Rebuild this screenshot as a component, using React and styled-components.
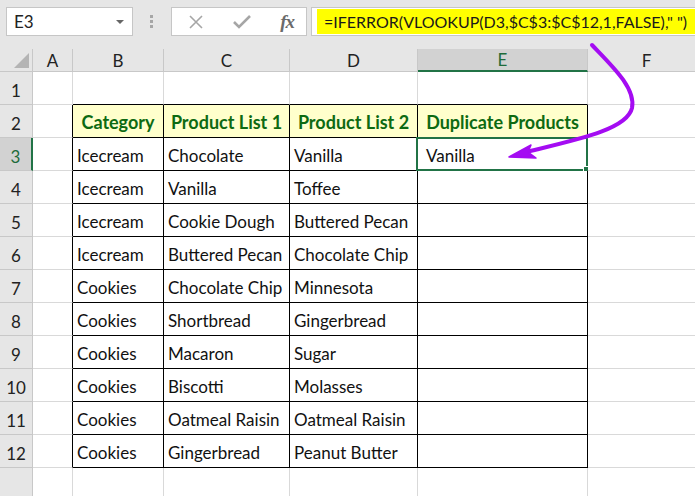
import React from 'react';
import styled, { createGlobalStyle } from 'styled-components';

const GlobalStyle = createGlobalStyle`
  html, body {
    margin: 0;
    padding: 0;
    background: #ffffff;
    overflow: hidden;
  }
  body {
    font-family: Lato, "Liberation Sans", sans-serif;
  }
`;

const Page = styled.div`
  position: relative;
  width: 695px;
  height: 496px;
  overflow: hidden;
  background: #e6e6e6;
`;

const Toolbar = styled.div`
  display: flex;
  align-items: flex-start;
  height: 43px;
  padding: 7px 0 0 6px;
  box-sizing: border-box;
  overflow: hidden;
`;

const NameBox = styled.div`
  flex-shrink: 0;
  display: flex;
  align-items: center;
  justify-content: space-between;
  width: 127px;
  height: 29px;
  box-sizing: border-box;
  background: #fff;
  border: 1px solid #c6c6c6;
  padding: 0 8px 0 7px;
  font-size: 17px;
  color: #222;
`;

const Caret = styled.span`
  width: 0;
  height: 0;
  border-left: 4px solid transparent;
  border-right: 4px solid transparent;
  border-top: 4px solid #666;
`;

const Grip = styled.div`
  flex-shrink: 0;
  display: flex;
  flex-direction: column;
  gap: 2px;
  margin: 8px 18px 0 17px;
  span {
    width: 3px;
    height: 3px;
    background: #a6a6a6;
  }
`;

const IconBox = styled.div`
  flex-shrink: 0;
  display: flex;
  align-items: center;
  justify-content: space-between;
  width: 136px;
  height: 29px;
  box-sizing: border-box;
  background: #fff;
  border: 1px solid #c6c6c6;
  padding: 0 12px 0 16px;
`;

const Fx = styled.span`
  font-family: "Liberation Serif", serif;
  font-style: italic;
  font-weight: bold;
  font-size: 19px;
  color: #6b6b6b;
  letter-spacing: -1px;
`;

const FormulaBox = styled.div`
  flex: 1;
  min-width: 0;
  display: flex;
  align-items: center;
  height: 29px;
  box-sizing: border-box;
  background: #fff;
  border: 1px solid #c6c6c6;
  border-right: none;
  margin-left: 4px;
  padding: 0 0 0 5px;
  overflow: hidden;
`;

const Highlight = styled.span`
  display: flex;
  align-items: center;
  height: 25px;
  padding: 0 9px 0 7px;
  background: #ffff00;
  font-family: Lato, "Liberation Sans", sans-serif;
  font-size: 16px;
  color: #1a1a1a;
  white-space: nowrap;
`;

const Sheet = styled.div`
  display: grid;
  grid-template-columns: 33px 40px 91px 126px 128px 170px 118px;
  grid-template-rows: 23px repeat(12, 33px) 33px;
  margin-top: 6px;
  background: #fff;
`;

const Corner = styled.div`
  position: relative;
  background: #e6e6e6;
  border-right: 1px solid #c8c8c8;
  border-bottom: 1px solid #c8c8c8;
  box-sizing: border-box;
  &::after {
    content: '';
    position: absolute;
    right: 3px;
    bottom: 3px;
    width: 0;
    height: 0;
    border-left: 15px solid transparent;
    border-bottom: 15px solid #b4b4b4;
  }
`;

const ColHead = styled.div`
  display: flex;
  align-items: center;
  justify-content: center;
  box-sizing: border-box;
  background: ${p => (p.$active ? '#d2d2d2' : '#e6e6e6')};
  border-right: 1px solid #c8c8c8;
  border-bottom: ${p => (p.$active ? '2px solid #217346' : '1px solid #c8c8c8')};
  font-size: 17px;
  color: ${p => (p.$active ? '#1e6b3a' : '#222')};
`;

const RowHead = styled.div`
  display: flex;
  align-items: flex-end;
  justify-content: center;
  padding-bottom: 3px;
  box-sizing: border-box;
  background: ${p => (p.$active ? '#d2d2d2' : '#e6e6e6')};
  border-right: ${p => (p.$active ? '2px solid #217346' : '1px solid #c8c8c8')};
  border-bottom: 1px solid #c8c8c8;
  font-size: 17px;
  color: ${p => (p.$active ? '#1e6b3a' : '#222')};
`;

const Cell = styled.div`
  position: relative;
  display: flex;
  align-items: flex-end;
  padding: 0 0 4px 4px;
  box-sizing: border-box;
  white-space: nowrap;
  background: ${p => (p.$head ? '#ffffcc' : '#fff')};
  border-right: 1px solid ${p => (p.$edgeRight ? '#000' : '#d9d9d9')};
  border-bottom: 1px solid ${p => (p.$edgeBottom ? '#000' : '#d9d9d9')};
  font-size: ${p => (p.$head ? '18px' : '17px')};
  font-weight: ${p => (p.$head ? 700 : 400)};
  color: ${p => (p.$head ? '#0d6a12' : '#111')};
  justify-content: ${p => (p.$head ? 'center' : 'flex-start')};
  ${p => p.$head && 'padding-left: 0;'}
  ${p => p.$indent && 'padding-left: 8px;'}
`;

const Selection = styled.div`
  position: absolute;
  left: -2px;
  top: -1px;
  right: -1px;
  bottom: -1px;
  border: 2px solid #217346;
  pointer-events: none;
  &::after {
    content: '';
    position: absolute;
    right: -4px;
    bottom: -4px;
    width: 5px;
    height: 5px;
    background: #217346;
    border: 1px solid #fff;
  }
`;

const Arrow = styled.svg`
  position: absolute;
  left: 0;
  top: 0;
  pointer-events: none;
`;

const columns = ['A', 'B', 'C', 'D', 'E', 'F'];

const rows = [
  ['Icecream', 'Chocolate', 'Vanilla', 'Vanilla'],
  ['Icecream', 'Vanilla', 'Toffee', ''],
  ['Icecream', 'Cookie Dough', 'Buttered Pecan', ''],
  ['Icecream', 'Buttered Pecan', 'Chocolate Chip', ''],
  ['Cookies', 'Chocolate Chip', 'Minnesota', ''],
  ['Cookies', 'Shortbread', 'Gingerbread', ''],
  ['Cookies', 'Macaron', 'Sugar', ''],
  ['Cookies', 'Biscotti', 'Molasses', ''],
  ['Cookies', 'Oatmeal Raisin', 'Oatmeal Raisin', ''],
  ['Cookies', 'Gingerbread', 'Peanut Butter', ''],
];

const headers = ['Category', 'Product List 1', 'Product List 2', 'Duplicate Products'];

function rowValues(r) {
  // r is the sheet row number (1-based)
  if (r === 2) return ['', ...headers, ''];
  if (r >= 3 && r <= 12) return ['', ...rows[r - 3], ''];
  return ['', '', '', '', '', ''];
}

function App() {
  const sheetRows = Array.from({ length: 13 }, (_, i) => i + 1);

  return (
    <Page>
      <GlobalStyle />
      <Toolbar>
        <NameBox>
          E3
          <Caret />
        </NameBox>
        <Grip>
          <span />
          <span />
          <span />
        </Grip>
        <IconBox>
          <svg width="16" height="16" viewBox="0 0 16 16">
            <path d="M2 2 L14 14 M14 2 L2 14" stroke="#a6a6a6" strokeWidth="1.6" fill="none" />
          </svg>
          <svg width="18" height="16" viewBox="0 0 18 16">
            <path d="M1 8 L6 13 L17 2" stroke="#a6a6a6" strokeWidth="2.6" fill="none" />
          </svg>
          <Fx>fx</Fx>
        </IconBox>
        <FormulaBox>
          <Highlight>=IFERROR(VLOOKUP(D3,$C$3:$C$12,1,FALSE),&quot; &quot;)</Highlight>
        </FormulaBox>
      </Toolbar>

      <Sheet>
        <Corner />
        {columns.map(c => (
          <ColHead key={c} $active={c === 'E'}>
            {c}
          </ColHead>
        ))}
        {sheetRows.map(r => (
          <React.Fragment key={r}>
            {/* row 13 is cut by the window edge, so its number is not shown */}
            <RowHead $active={r === 3}>{r <= 12 ? r : ''}</RowHead>
            {rowValues(r).map((v, ci) => {
              const inTableRows = r >= 2 && r <= 12;
              const edgeRight = inTableRows && ci >= 0 && ci <= 4;
              const edgeBottom = r >= 1 && r <= 12 && ci >= 1 && ci <= 4;
              return (
                <Cell
                  key={ci}
                  $head={r === 2 && ci >= 1 && ci <= 4}
                  $edgeRight={edgeRight}
                  $edgeBottom={edgeBottom}
                  $indent={r === 3 && ci === 4}
                >
                  {v}
                  {r === 3 && ci === 4 && <Selection />}
                </Cell>
              );
            })}
          </React.Fragment>
        ))}
      </Sheet>

      <Arrow width="695" height="496" viewBox="0 0 695 496">
        <path
          d="M592 45 C 612 66, 636 88, 632 108 C 627 130, 575 140, 522 153"
          stroke="#a40cf2"
          strokeWidth="4"
          fill="none"
          strokeLinecap="round"
        />
        <path d="M509 157 L531 145 L528 152 L536 158 Z" fill="#a40cf2" stroke="#a40cf2" strokeWidth="1.5" strokeLinejoin="round" />
      </Arrow>
    </Page>
  );
}

export default App;
